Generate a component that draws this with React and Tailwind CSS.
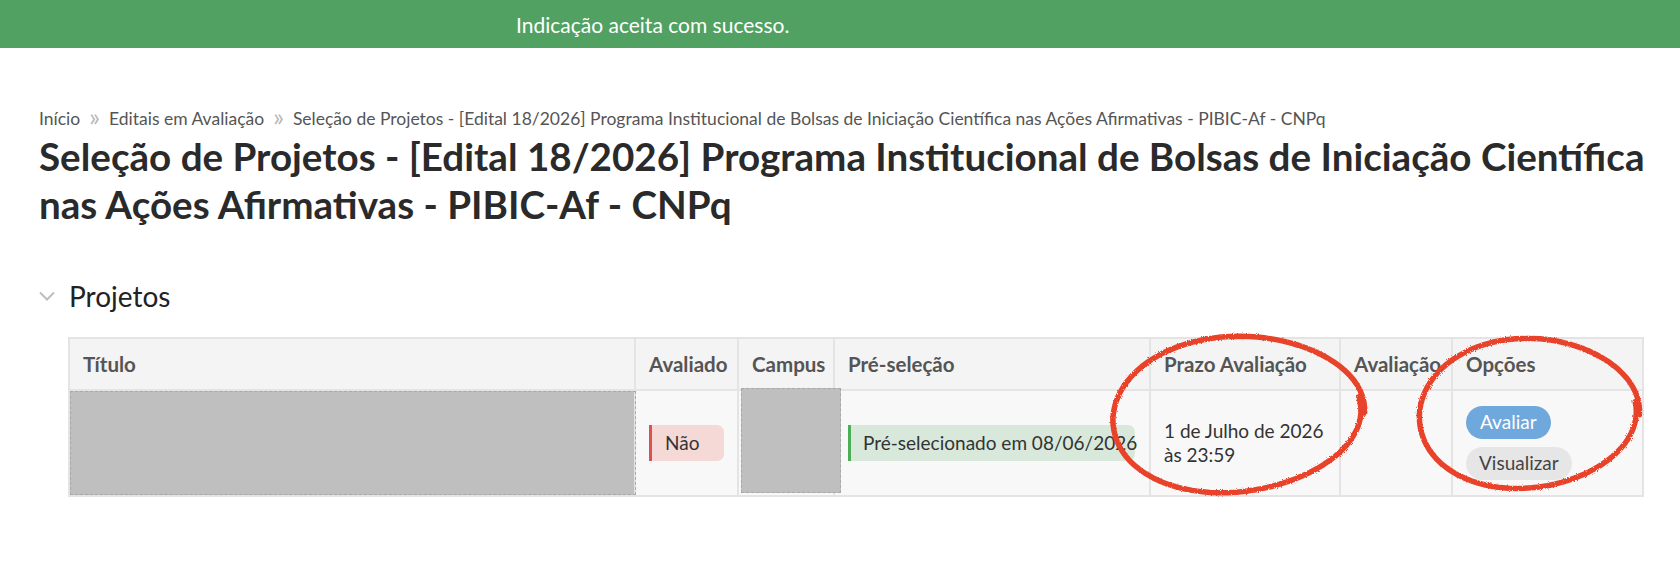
import React from "react";

function ovalPath(cx, cy, rx, ry, rot, startDeg, sweepDeg, drift, wobble) {
  const pts = [];
  const n = 90;
  const r0 = (rot * Math.PI) / 180;
  for (let i = 0; i <= n; i++) {
    const t = i / n;
    const a = ((startDeg - sweepDeg * t) * Math.PI) / 180;
    const k = 1 + drift * t + wobble * Math.sin(a * 3 + 1.3);
    const x = rx * k * Math.cos(a);
    const y = ry * k * Math.sin(a);
    const xr = cx + x * Math.cos(r0) - y * Math.sin(r0);
    const yr = cy + x * Math.sin(r0) + y * Math.cos(r0);
    pts.push(xr.toFixed(1) + " " + yr.toFixed(1));
  }
  return "M" + pts.join(" L");
}

export default function App() {
  const cell = "border-r-2 border-[#e4e4e4] px-[13px]";
  const cols = "grid grid-cols-[566px_103px_96px_316px_190px_112px_189px]";
  return (
    <div
      className="relative w-[1680px] h-[565px] bg-white overflow-hidden"
      style={{ fontFamily: "Lato, 'Open Sans', sans-serif" }}
    >
      <div className="h-[48px] bg-[#51a162] flex items-center pl-[516px]">
        <span className="text-white text-[21px] leading-none">Indicação aceita com sucesso.</span>
      </div>

      <div className="pl-[39px] pr-[10px]">
        <div className="mt-[62px] h-[17px] text-[17.5px] leading-[17px] text-[#555] flex items-center whitespace-nowrap">
          <span>Início</span>
          <span className="mx-[9px] text-[25px] leading-[17px] text-[#b8b8b8] -translate-y-[2px]">»</span>
          <span>Editais em Avaliação</span>
          <span className="mx-[9px] text-[25px] leading-[17px] text-[#b8b8b8] -translate-y-[2px]">»</span>
          <span>
            Seleção de Projetos - [Edital 18/2026] Programa Institucional de Bolsas de Iniciação Científica nas Ações Afirmativas - PIBIC-Af - CNPq
          </span>
        </div>
        <h1 className="mt-[5px] text-[38.6px] leading-[48px] font-bold text-[#2a2a2a] whitespace-nowrap">
          Seleção de Projetos - [Edital 18/2026] Programa Institucional de Bolsas de Iniciação Científica
          <br />
          nas Ações Afirmativas - PIBIC-Af - CNPq
        </h1>

        <div className="mt-[52px] flex items-center">
          <svg width="16" height="10" viewBox="0 0 16 10" className="mr-[14px]">
            <path d="M1 1.5 L8 8.5 L15 1.5" fill="none" stroke="#bdbdbd" strokeWidth="2" />
          </svg>
          <span className="text-[28px] leading-[32px] text-[#222]">Projetos</span>
        </div>

        <div className="ml-[29px] mt-[25px] w-[1576px] border-2 border-[#e4e4e4] text-[19px]">
          <div className={cols + " h-[52px] bg-[#f4f4f4] border-b-2 border-[#e4e4e4] font-bold text-[20.5px] text-[#555]"}>
            <div className={cell + " flex items-center"}>Título</div>
            <div className={cell + " flex items-center"}>Avaliado</div>
            <div className={cell + " flex items-center"}>Campus</div>
            <div className={cell + " flex items-center"}>Pré-seleção</div>
            <div className={cell + " flex items-center"}>Prazo Avaliação</div>
            <div className={cell + " flex items-center whitespace-nowrap"}>Avaliação</div>
            <div className="px-[13px] flex items-center">Opções</div>
          </div>
          <div className={cols + " h-[104px] bg-[#f8f8f8] text-[#333]"}>
            <div className="border-r-2 border-[#e4e4e4] bg-[#bfbfbf] outline-1 outline-dashed outline-[#a8a8a8] outline-offset-[-1px]"></div>
            <div className={cell + " flex items-center"}>
              <span className="h-[36px] w-[76px] flex items-center pl-[13px] border-l-[3px] border-[#d9534f] bg-[#f4d9d7] rounded-r-[7px]">
                Não
              </span>
            </div>
            <div className="relative border-r-2 border-[#e4e4e4]">
              <div className="absolute left-[2px] top-[-3px] w-[100px] h-[105px] bg-[#bfbfbf] outline-1 outline-dashed outline-[#a8a8a8] outline-offset-[-1px]"></div>
            </div>
            <div className={cell + " flex items-center"}>
              <span className="h-[36px] w-[287px] flex items-center pl-[12px] border-l-[3px] border-[#4cae55] bg-[#d8e9dc] rounded-r-[7px] whitespace-nowrap">
                Pré-selecionado em 08/06/2026
              </span>
            </div>
            <div className={cell + " flex items-center leading-[24px]"}>
              <div>
                1 de Julho de 2026
                <br />
                às 23:59
              </div>
            </div>
            <div className={cell}></div>
            <div className="px-[13px] flex flex-col items-start justify-center gap-[8px]">
              <span className="h-[33px] px-[14px] rounded-full bg-[#6fa8dc] text-white flex items-center">Avaliar</span>
              <span className="h-[33px] px-[13px] rounded-full bg-[#e6e6e6] text-[#444] flex items-center">Visualizar</span>
            </div>
          </div>
        </div>
      </div>

      <svg className="absolute left-0 top-0 pointer-events-none" width="1680" height="565">
        <defs>
          <filter id="rough" x="-10%" y="-10%" width="120%" height="120%">
            <feTurbulence type="fractalNoise" baseFrequency="0.8" numOctaves="2" result="n" />
            <feDisplacementMap in="SourceGraphic" in2="n" scale="3" />
          </filter>
        </defs>
        <path
          d={ovalPath(1236, 415, 127, 79, -4, 5, 372, -0.03, 0.015)}
          fill="none"
          stroke="#e8432b"
          strokeWidth="5.5"
          strokeLinecap="round"
          strokeLinejoin="round"
          filter="url(#rough)"
        />
        <path
          d={ovalPath(1527, 414, 111, 76, -3, 5, 370, -0.03, 0.015)}
          fill="none"
          stroke="#e8432b"
          strokeWidth="5.5"
          strokeLinecap="round"
          strokeLinejoin="round"
          filter="url(#rough)"
        />
      </svg>
    </div>
  );
}
